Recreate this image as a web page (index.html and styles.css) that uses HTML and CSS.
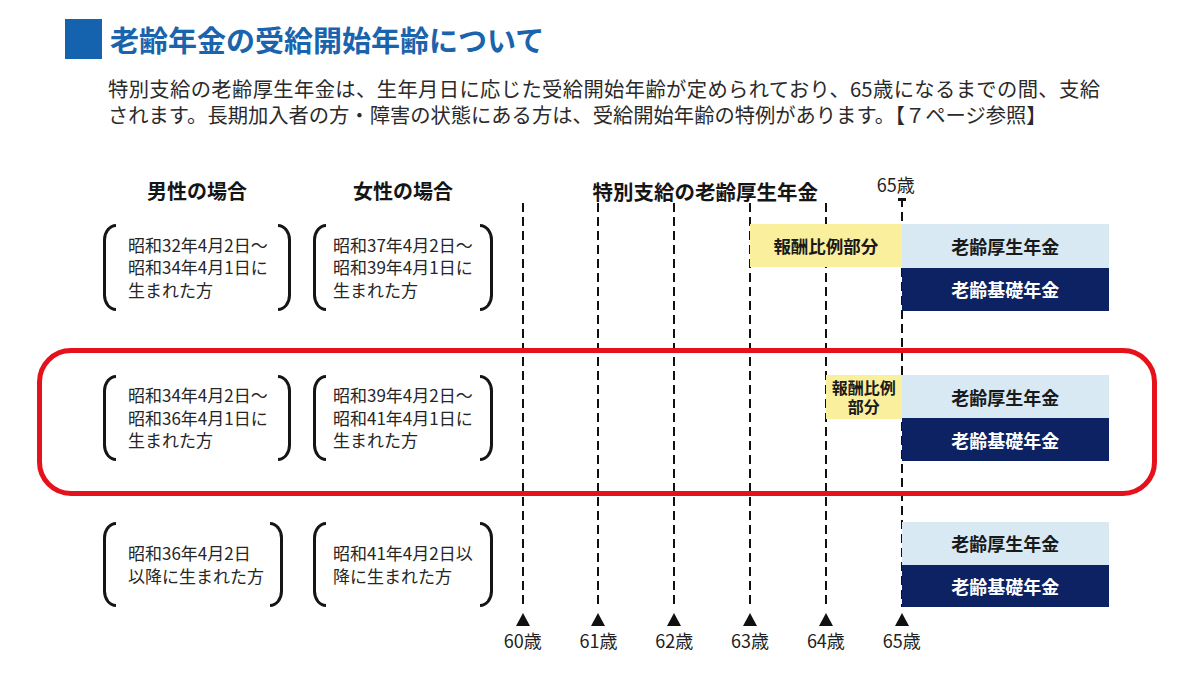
FILE: index.html
```html
<!DOCTYPE html>
<html lang="ja">
<head>
<meta charset="utf-8">
<title>老齢年金の受給開始年齢について</title>
<link rel="stylesheet" href="styles.css">
</head>
<body>
<div class="page">
  <header class="head">
    <div class="title-row">
      <span class="title-mark"></span>
      <h1 class="title">老齢年金の受給開始年齢について</h1>
    </div>
    <div class="lead">
      <p class="lead-line lead-line--full">特別支給の老齢厚生年金は、生年月日に応じた受給開始年齢が定められており、65歳になるまでの間、支給</p>
      <p class="lead-line">されます。長期加入者の方・障害の状態にある方は、受給開始年齢の特例があります。【７ページ参照】</p>
    </div>
  </header>

  <section class="chart">
    <div class="col-head col-head--men">男性の場合</div>
    <div class="col-head col-head--women">女性の場合</div>
    <div class="col-head col-head--tl">特別支給の老齢厚生年金</div>
    <div class="age-top">65歳</div>

    <div class="vline vline--60"></div>
    <div class="vline vline--61"></div>
    <div class="vline vline--62"></div>
    <div class="vline vline--63"></div>
    <div class="vline vline--64"></div>
    <div class="vline vline--65"></div>

    <!-- row 1 -->
    <div class="bracket bracket--men row-1">
      <span class="bracket__l"></span>
      <span class="bracket__text">昭和32年4月2日～<br>昭和34年4月1日に<br>生まれた方</span>
      <span class="bracket__r"></span>
    </div>
    <div class="bracket bracket--women row-1">
      <span class="bracket__l"></span>
      <span class="bracket__text">昭和37年4月2日～<br>昭和39年4月1日に<br>生まれた方</span>
      <span class="bracket__r"></span>
    </div>
    <div class="bar bar--yellow bar--from63 row-1">報酬比例部分</div>
    <div class="stack row-1">
      <div class="bar bar--light">老齢厚生年金</div>
      <div class="bar bar--navy">老齢基礎年金</div>
    </div>

    <!-- row 2 -->
    <div class="bracket bracket--men row-2">
      <span class="bracket__l"></span>
      <span class="bracket__text">昭和34年4月2日～<br>昭和36年4月1日に<br>生まれた方</span>
      <span class="bracket__r"></span>
    </div>
    <div class="bracket bracket--women row-2">
      <span class="bracket__l"></span>
      <span class="bracket__text">昭和39年4月2日～<br>昭和41年4月1日に<br>生まれた方</span>
      <span class="bracket__r"></span>
    </div>
    <div class="bar bar--yellow bar--from64 row-2">報酬比例<br>部分</div>
    <div class="stack row-2">
      <div class="bar bar--light">老齢厚生年金</div>
      <div class="bar bar--navy">老齢基礎年金</div>
    </div>

    <!-- row 3 -->
    <div class="bracket bracket--men bracket--narrow row-3">
      <span class="bracket__l"></span>
      <span class="bracket__text">昭和36年4月2日<br>以降に生まれた方</span>
      <span class="bracket__r"></span>
    </div>
    <div class="bracket bracket--women row-3">
      <span class="bracket__l"></span>
      <span class="bracket__text">昭和41年4月2日以<br>降に生まれた方</span>
      <span class="bracket__r"></span>
    </div>
    <div class="stack row-3">
      <div class="bar bar--light">老齢厚生年金</div>
      <div class="bar bar--navy">老齢基礎年金</div>
    </div>

    <!-- axis -->
    <div class="tick tick--60"><span class="tick__tri"></span><span class="tick__label">60歳</span></div>
    <div class="tick tick--61"><span class="tick__tri"></span><span class="tick__label">61歳</span></div>
    <div class="tick tick--62"><span class="tick__tri"></span><span class="tick__label">62歳</span></div>
    <div class="tick tick--63"><span class="tick__tri"></span><span class="tick__label">63歳</span></div>
    <div class="tick tick--64"><span class="tick__tri"></span><span class="tick__label">64歳</span></div>
    <div class="tick tick--65"><span class="tick__tri"></span><span class="tick__label">65歳</span></div>

    <div class="highlight"></div>
  </section>
</div>
</body>
</html>
```

FILE: styles.css
```css
* { box-sizing: border-box; }

body {
  margin: 0;
  background: #ffffff;
  font-family: "Noto Sans CJK JP", "Noto Sans", sans-serif;
  color: #222222;
}

.page {
  width: 1200px;
  height: 675px;
  overflow: hidden;
}

/* ---------- header ---------- */
.head {
  padding-top: 19px;
}

.title-row {
  display: flex;
  align-items: center;
  gap: 8px;
  margin-left: 65px;
  height: 40px;
}

.title-mark {
  width: 37px;
  height: 40px;
  background: #1562ae;
  flex: none;
}

.title {
  margin: 0;
  font-size: 29px;
  line-height: 40px;
  font-weight: 700;
  color: #1a63ad;
}

.lead {
  margin: 16px 0 0 108px;
  width: 992px;
}

.lead-line {
  margin: 0;
  font-size: 20.3px;
  line-height: 26px;
  color: #2a2a2a;
}

.lead-line--full {
  text-align: justify;
  text-align-last: justify;
}

/* ---------- chart ---------- */
.chart {
  margin-top: 43px;
  display: grid;
  grid-template-columns: 37px 66px 188px 22px 180px 29.7px repeat(5, 75.8px) 207.3px 48px 1fr;
  grid-template-rows: 42px 12px 87px 37px 27px 86px 35px 26px 85px 53px;
}

.col-head {
  grid-row: 1;
  font-size: 20px;
  line-height: 42px;
  font-weight: 700;
  color: #151515;
  text-align: center;
}
.col-head--men { grid-column: 3; }
.col-head--women { grid-column: 5; }
.col-head--tl {
  grid-column: 7 / 12;
  font-size: 20.5px;
  margin-right: 14px;
}

.age-top {
  grid-row: 1;
  grid-column: 12;
  justify-self: start;
  align-self: start;
  margin-top: 4px;
  margin-left: -25px;
  font-size: 18px;
  line-height: 20px;
  color: #222;
}

/* dashed vertical lines */
.vline {
  grid-row: 2 / 10;
  justify-self: start;
  width: 2px;
  margin-left: -1px;
  margin-top: -9px;
  background: repeating-linear-gradient(to bottom, #111 0 9px, transparent 9px 14px);
}
.vline--60 { grid-column: 7; }
.vline--61 { grid-column: 8; }
.vline--62 { grid-column: 9; }
.vline--63 { grid-column: 10; }
.vline--64 { grid-column: 11; }
.vline--65 { grid-column: 12; margin-top: -14px; }
.vline--65::before {
  content: "";
  display: block;
  width: 8px;
  height: 3px;
  margin-left: -3px;
  background: #111;
}

/* rows */
.row-1 { grid-row: 3; }
.row-2 { grid-row: 6; }
.row-3 { grid-row: 9; }

/* brackets */
.bracket {
  display: flex;
  align-items: stretch;
}
.bracket--men { grid-column: 3; }
.bracket--women { grid-column: 5; }
.bracket--narrow { margin-right: 8px; }

.bracket__l,
.bracket__r {
  flex: none;
  width: 13px;
  border: 3.5px solid #151515;
}
.bracket__l {
  border-right: none;
  border-radius: 13px 0 0 13px / 16px 0 0 16px;
}
.bracket__r {
  border-left: none;
  border-radius: 0 13px 13px 0 / 0 16px 16px 0;
}

.bracket__text {
  flex: 1;
  align-self: center;
  font-size: 17px;
  line-height: 22.5px;
  color: #262626;
  white-space: nowrap;
}
.bracket--men .bracket__text { padding-left: 12px; }
.bracket--women .bracket__text { padding-left: 7px; }

/* bars */
.bar {
  display: flex;
  align-items: center;
  justify-content: center;
  text-align: center;
  font-weight: 700;
  font-size: 18px;
  color: #1a1a1a;
}

.bar--yellow {
  align-self: start;
  height: 43px;
  background: #faef9c;
  font-size: 17.5px;
}
.bar--from63 { grid-column: 10 / 12; }
.bar--from64 {
  grid-column: 11 / 12;
  height: 44px;
  font-size: 16px;
  line-height: 19px;
}

.stack {
  grid-column: 12;
  display: flex;
  flex-direction: column;
}
.stack .bar { flex: 1; }

.bar--light { background: #d8e9f4; }
.bar--navy { background: #0c2262; color: #ffffff; }

/* axis */
.tick {
  grid-row: 10;
  justify-self: start;
  align-self: start;
  width: 60px;
  margin-left: -30px;
  margin-top: 6px;
  display: flex;
  flex-direction: column;
  align-items: center;
}
.tick--60 { grid-column: 7; }
.tick--61 { grid-column: 8; }
.tick--62 { grid-column: 9; }
.tick--63 { grid-column: 10; }
.tick--64 { grid-column: 11; }
.tick--65 { grid-column: 12; }

.tick__tri {
  width: 0;
  height: 0;
  border-left: 7.5px solid transparent;
  border-right: 7.5px solid transparent;
  border-bottom: 13px solid #111;
}
.tick__label {
  margin-top: 3px;
  font-size: 18px;
  line-height: 22px;
  color: #222;
}

/* red highlight */
.highlight {
  grid-column: 2 / 14;
  grid-row: 5 / 8;
  border: 5px solid #e5121b;
  border-radius: 34px;
}
```
